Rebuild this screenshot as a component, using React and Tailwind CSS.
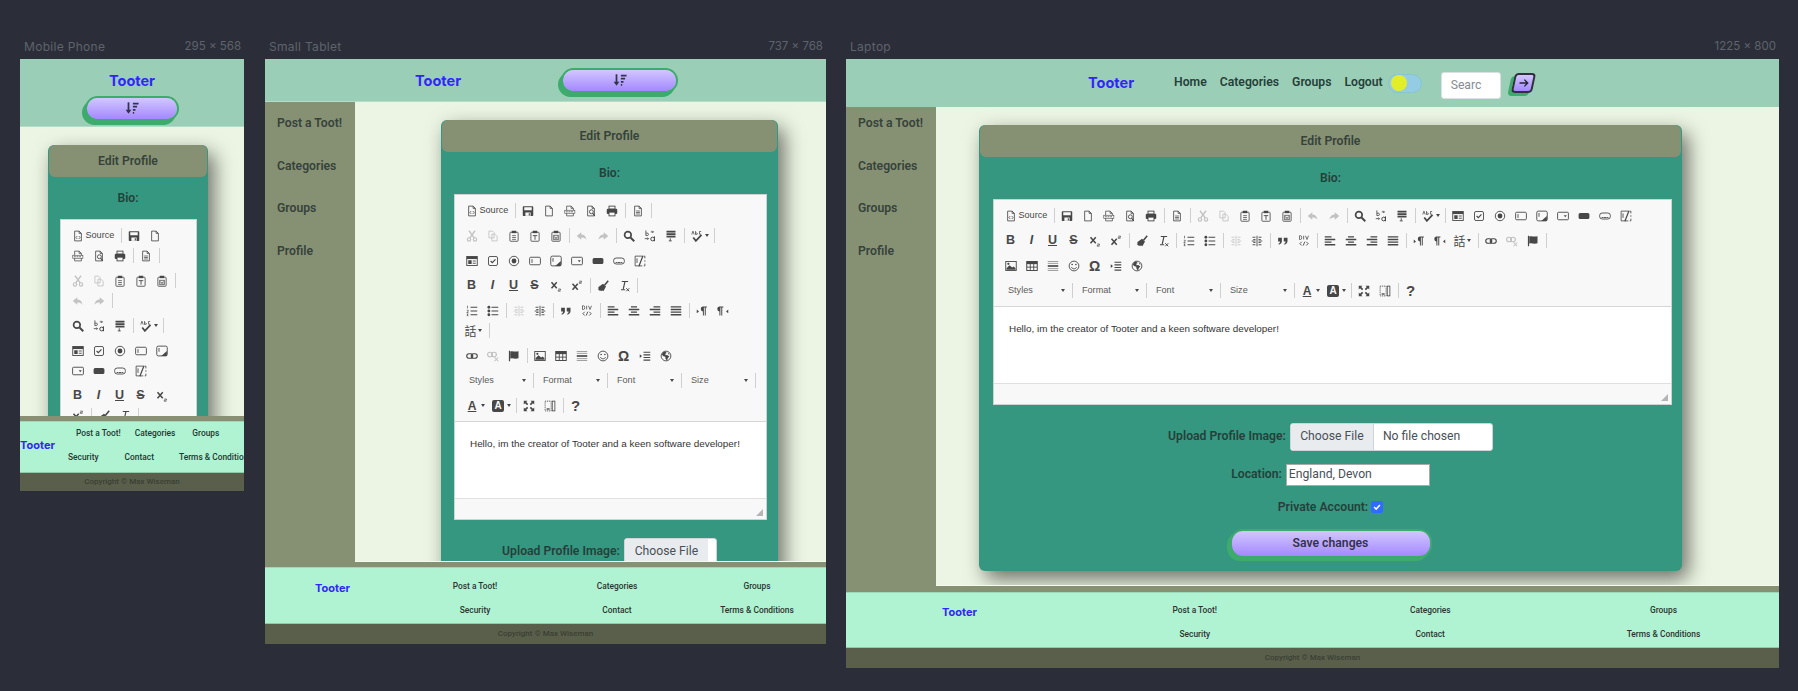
import React from "react";

const ROBOTO = "font-['Roboto','Inter',sans-serif]";

const doc = "M3.5 1.5h6l3 3v10h-9z M9.5 1.5v3h3";
const P = ({ d, w = 1.3, f = "none" }) => (
  <path d={d} fill={f} stroke={f === "none" ? "currentColor" : "none"} strokeWidth={w} />
);

const clip = (
  <>
    <rect x="2.5" y="3" width="11" height="12" rx="1" fill="none" stroke="currentColor" strokeWidth="1.1" />
    <rect x="5" y="1" width="6" height="3.2" fill="currentColor" />
  </>
);

const icons = {
  source: <><P d={doc} w={1.1} /><P d="M7 8 5.2 10 7 12 M9 8l1.8 2L9 12" w={1} /></>,
  save: <><P f="currentColor" d="M1 2.5a1 1 0 0 1 1-1h12a1 1 0 0 1 1 1v11a1 1 0 0 1-1 1H2a1 1 0 0 1-1-1z" /><rect x="3" y="3" width="10" height="4" fill="#f8f8f8" /><rect x="4.5" y="10" width="7" height="4.5" fill="#f8f8f8" /><rect x="9" y="11" width="1.5" height="3" fill="currentColor" /></>,
  newpage: <P d={doc} w={1.1} />,
  pdf: <><P d={doc} w={1} /><rect x="1" y="7" width="13.5" height="4" fill="#f8f8f8" stroke="currentColor" strokeWidth="0.8" /><path d="M2.500 9h10.500" stroke="currentColor" strokeWidth="1" strokeDasharray="2.500 1" /></>,
  preview: <><P d={doc} w={1.1} /><circle cx="8.5" cy="9" r="2.6" fill="none" stroke="currentColor" strokeWidth="1.2" /><P d="M10.2 11 13 14.5" w={1.6} /></>,
  print: <><rect x="4" y="1.5" width="8" height="4" fill="none" stroke="currentColor" strokeWidth="1.2" /><rect x="1" y="5" width="14" height="7" rx="1.5" fill="currentColor" /><rect x="4" y="9.5" width="8" height="5" fill="#f8f8f8" stroke="currentColor" strokeWidth="1.2" /></>,
  templates: <><P d={doc} w={1.1} /><P d="M5.5 8h5 M5.5 10h5 M5.5 12h5" w={1} /></>,
  cut: <><circle cx="4" cy="12.5" r="2.2" fill="none" stroke="currentColor" strokeWidth="1.6" /><circle cx="12" cy="12.5" r="2.2" fill="none" stroke="currentColor" strokeWidth="1.6" /><P d="M5 10.5 12 1 M11 10.5 4 1" w={1.8} /></>,
  copy: <><P d="M2.5 1.5h5l2 2v7h-7z" w={1.1} /><P d="M6.5 5.5h4l3 3v6h-7z" w={1.1} /></>,
  paste: <>{clip}<P d="M5.5 7.5h5 M5.5 10h5 M5.5 12.5h5" w={1} /></>,
  pastetext: <>{clip}<P d="M5 7.5h6 M8 7.5v5.5" w={1.2} /></>,
  pasteword: <>{clip}<rect x="5" y="7" width="6" height="6" fill="none" stroke="currentColor" strokeWidth="1" /><P d="M6.2 8.500 7 11.500 8 9.500l1 2 .8-3" w={.8} /></>,
  undo: <P f="currentColor" d="M7 3 1 8l6 5V10c3 0 5 .5 7 3-.5-4-3-7-7-7z" />,
  redo: <P f="currentColor" d="M9 3l6 5-6 5V10c-3 0-5 .5-7 3 .5-4 3-7 7-7z" />,
  find: <><circle cx="6.5" cy="6.5" r="4.4" fill="none" stroke="currentColor" strokeWidth="2.2" /><P d="m10 10 5 5" w={2.6} /></>,
  replace: <><P d="M2.500 .5v7 M2.500 4.200h1.800a1.600 1.600 0 0 1 0 3.200H2.500 M9 2.500h3.500l-1.500-1.500 M12.500 2.500 11 4 M1 11.500h5 M4.500 10 6 11.500 4.500 13" w={1.100} /><circle cx="11.500" cy="12" r="2.500" fill="none" stroke="currentColor" strokeWidth="1.300" /><P d="M14 8.500v6.500" w={1.300} /></>,
  selectall: <><rect x="2" y="1" width="12" height="2.4" fill="currentColor" /><rect x="2" y="4.3" width="12" height="2.4" fill="currentColor" /><rect x="2" y="7.6" width="12" height="2.4" fill="currentColor" /><P d="M7 11v3.5 M5 14.5h4" w={1.2} /></>,
  scayt: <><P d="M1 6 2.6 1.5 4.2 6 M6 1.5V6h1.5a1 1 0 0 0 0-2H6 M13.5 2h-2.2v3.6h2.2" w={1} /><P d="m3 10 3.5 4.5L14 6.5" w={2.3} /></>,
  form: <><rect x="1" y="2" width="14" height="12" fill="none" stroke="currentColor" strokeWidth="1.2" /><rect x="1" y="2" width="14" height="3.4" fill="currentColor" /><rect x="3" y="7" width="4.5" height="5" fill="currentColor" /><P d="M9 8h4 M9 11h4" w={1.2} /></>,
  checkbox: <><rect x="2" y="2" width="12" height="12" rx="2" fill="none" stroke="currentColor" strokeWidth="1.2" /><P d="m4.8 8 2.3 2.3 4.2-4.6" w={1.5} /></>,
  radio: <><circle cx="8" cy="8" r="6.3" fill="none" stroke="currentColor" strokeWidth="1.2" /><circle cx="8" cy="8" r="3.2" fill="currentColor" /></>,
  textfield: <><rect x="0.8" y="3" width="14.4" height="10" rx="1.5" fill="none" stroke="currentColor" strokeWidth="1.2" /><P d="M4 5.5v5" w={1.2} /></>,
  textarea: <><rect x="1" y="1.5" width="14" height="13" rx="2" fill="none" stroke="currentColor" strokeWidth="1.2" /><P d="M4 4v5" w={1.2} /><P f="currentColor" d="M14.5 8v6.5H7z" /></>,
  select: <><rect x="0.8" y="3" width="14.4" height="10" rx="1.2" fill="none" stroke="currentColor" strokeWidth="1.2" /><P f="currentColor" d="M9 7h4l-2 2.5z" /></>,
  button: <rect x="0.8" y="4" width="14.4" height="8" rx="2" fill="currentColor" />,
  imagebutton: <><rect x="0.8" y="4" width="14.4" height="8" rx="3.5" fill="none" stroke="currentColor" strokeWidth="1.2" /><P d="M3.5 10h2.5 M10 10h2.5 M6.5 10h3" w={1.2} /></>,
  hidden: <><P d="M11 1.5H1.5v13H11" w={1.1} /><P d="M13 1.5h1.5v3 M14.5 7v2 M14.5 11.5v3H13" w={1.1} /><P d="M4 4.5v6" w={1.2} /><P d="M12 1 6.5 15" w={1.6} /></>,
  sub: <><P d="m2 3 7 8 M9 3l-7 8" w={2} /><P d="M11 12h3v1.5h-3V15h3" w={.9} /></>,
  sup: <><P d="m2 5 7 8 M9 5l-7 8" w={2} /><P d="M11 1.5h3V3h-3v1.5h3" w={.9} /></>,
  copyformat: <><P d="m15 1-5 6" w={2} /><P f="currentColor" d="m8 5 4 3.5-3.5 6.5-2-1.5-.5 1.5-1-1-1 .5L1 12l1.5-1-1-1.5z" /></>,
  removeformat: <><P d="M5 2h8.5 M9.3 2 7 12 M4 13h5.5" w={1.5} /><P d="m11 11 4 4 M15 11l-4 4" w={1.3} /></>,
  ol: <><P d="M6 3h9 M6 8h9 M6 13h9" w={1.5} /><P d="M2 1v3.5 M1 7h2v1.4L1 10h2.2 M1 12h2L1.5 13 3 14.2H1" w={.9} /></>,
  ul: <><P d="M6 3h9 M6 8h9 M6 13h9" w={1.5} /><circle cx="2.5" cy="3" r="1.9" fill="currentColor" /><circle cx="2.5" cy="8" r="1.9" fill="currentColor" /><circle cx="2.5" cy="13" r="1.9" fill="currentColor" /></>,
  outdent: <><P d="M8 1v14" w={1} /><P d="M2 3h4 M3 6h3 M1 8h5 M3 10h3 M2 13h4 M10 3h4 M10 6h3 M10 8h5 M10 10h3 M10 13h4" w={1} /></>,
  indent: <><P d="M8 1v14" w={1.2} /><P d="M2 3h4 M3 6h3 M1 8h5 M3 10h3 M2 13h4 M10 3h4 M10 6h3 M10 8h5 M10 10h3 M10 13h4" w={1.2} /></>,
  blockquote: <><P f="currentColor" d="M1.5 3.5h5v4.5c0 2.2-1.2 4-4 5l-.6-1.2C3.2 11 4 10 4 8.5H1.5z" /><P f="currentColor" d="M9 3.5h5v4.5c0 2.2-1.2 4-4 5l-.6-1.2c1.300-.8 2.100-1.800 2.100-3.300H9z" /></>,
  div: <><P d="M2 1v5h1.5a1.500 2.500 0 0 0 0-5z M7.500 1v5 M10 1l2 5 2-5" w={1} /><P d="M5 9 2.500 11.500 5 14 M11 9l2.500 2.500L11 14 M9 9l-2 5" w={1.200} /></>,
  left: <P d="M1 2.500h9 M1 6h14 M1 9.500h9 M1 13h14" w={1.800} />,
  center: <P d="M4 2.500h8 M1 6h14 M4 9.500h8 M1 13h14" w={1.800} />,
  right: <P d="M6 2.500h9 M1 6h14 M6 9.500h9 M1 13h14" w={1.800} />,
  justify: <P d="M1 2.500h14 M1 6h14 M1 9.500h14 M1 13h14" w={1.800} />,
  ltr: <><P f="currentColor" d="M1 6l3 2.500L1 11z" /><P f="currentColor" d="M9 2h5.500v1.400H13V14h-1.300V3.400h-1.200V14H9.200V8.500a3.300 3.300 0 0 1-.2-6.500z" /></>,
  rtl: <><P f="currentColor" d="M15 6l-3 2.500 3 2.500z" /><P f="currentColor" d="M3 2h5.500v1.400H7V14H5.700V3.400H4.500V14H3.200V8.500A3.300 3.300 0 0 1 3 2z" /></>,
  link: <><rect x="1" y="5" width="8" height="6" rx="3" fill="none" stroke="currentColor" strokeWidth="1.500" /><rect x="7" y="5" width="8" height="6" rx="3" fill="none" stroke="currentColor" strokeWidth="1.500" /></>,
  unlink: <><rect x="0.800" y="3" width="6.500" height="6" rx="3" fill="none" stroke="currentColor" strokeWidth="1.500" /><rect x="6" y="3" width="6.500" height="6" rx="3" fill="none" stroke="currentColor" strokeWidth="1.500" /><P d="m10 10 5 5 M15 10l-5 5" w={1.400} /></>,
  anchor: <><P d="M2 1v14" w={1.600} /><P f="currentColor" d="M3 2c3.500-1.500 5.500 1 11-.5v9.500c-5.500 1.500-7.500-1-11 .5z" /></>,
  image: <><rect x="1" y="2" width="14" height="12" fill="none" stroke="currentColor" strokeWidth="1.200" /><P f="currentColor" d="M2 13V11l4-4 3.500 3 2-1.500L14 11v2z" /><circle cx="4.500" cy="5" r="1.500" fill="currentColor" /></>,
  table: <><rect x="1" y="2" width="14" height="12" fill="none" stroke="currentColor" strokeWidth="1.300" /><rect x="1" y="2" width="14" height="3.500" fill="currentColor" /><P d="M1 9.500h14 M5.700 5v9 M10.300 5v9" w={1.200} /></>,
  hr: <><g opacity="0.55"><P d="M1 2h14 M1 4.500h14 M1 11.500h14 M1 14h14" w={1.200} /></g><P d="M1 8h14" w={2.200} /></>,
  smiley: <><circle cx="8" cy="8" r="6.500" fill="none" stroke="currentColor" strokeWidth="1.200" /><circle cx="5.500" cy="6" r="1.100" fill="currentColor" /><circle cx="10.500" cy="6" r="1.100" fill="currentColor" /><P d="M4.500 9.500c1.500 3 5.500 3 7 0" w={1.200} /></>,
  pagebreak: <><P f="currentColor" d="M1 5.500 4 8 1 10.500z" /><P d="M6 3h9 M6 6.500h9 M6 10h9 M6 13.500h9" w={1.600} /></>,
  globe: <><circle cx="8" cy="8" r="6.500" fill="none" stroke="currentColor" strokeWidth="1.200" /><P f="currentColor" d="M7 2 4 3 2.500 6 4 8l3 1 .5 3 2 2 1-3.500 2-2-3-2-2 .5-.5-2 2-1z" /><P f="currentColor" d="m10 3 3 2.500L11.500 6z" /></>,
  maximize: <><P f="currentColor" d="M1 1h5L4.300 2.700 7 5.400 5.400 7 2.700 4.300 1 6z" /><P f="currentColor" d="M15 1v5l-1.700-1.700L10.600 7 9 5.400l2.700-2.700L10 1z" /><P f="currentColor" d="M1 15v-5l1.700 1.700L5.400 9 7 10.600l-2.700 2.700L6 15z" /><P f="currentColor" d="M15 15h-5l1.700-1.700L9 10.600 10.600 9l2.700 2.700L15 10z" /></>,
  showblocks: <><rect x="1.500" y="1.500" width="8" height="13" fill="none" stroke="currentColor" strokeWidth="1.100" strokeDasharray="1.500 1" /><rect x="11" y="1.500" width="3.500" height="13" fill="none" stroke="currentColor" strokeWidth="1.100" /><P d="M3.500 12h4" w={1.800} /></>,
};

const disabled = new Set(["cut", "copy", "undo", "redo", "outdent", "unlink"]);

const Svg = ({ name }) => (
  <svg viewBox="0 0 16 16" className="w-3 h-3 block">{icons[name]}</svg>
);

const Arrow = () => (
  <span className="w-0 h-0 border-x-[2.5px] border-x-transparent border-t-[3px] border-t-[#474747]" />
);

const glyphClass = "leading-none font-['Liberation_Sans',sans-serif] text-[#474747]";

const Glyph = ({ k }) => {
  if (k === "bold") return <span className={`${glyphClass} text-[12.500px] font-bold`}>B</span>;
  if (k === "italic") return <span className={`${glyphClass} text-[12.500px] italic font-bold`}>I</span>;
  if (k === "underline") return <span className={`${glyphClass} text-[12.500px] font-bold underline`}>U</span>;
  if (k === "strike") return <span className={`${glyphClass} text-[12.500px] font-bold line-through`}>S</span>;
  if (k === "omega") return <span className={`${glyphClass} text-[14px] font-bold`}>Ω</span>;
  if (k === "help") return <span className={`${glyphClass} text-[15px] font-bold`}>?</span>;
  return null;
};

const Slot = ({ k }) => (
  <span className={`w-[21px] h-5 flex items-center justify-center text-[#474747] ${disabled.has(k) ? "opacity-30" : ""}`}>
    {icons[k] ? <Svg name={k} /> : <Glyph k={k} />}
  </span>
);

const Sep = () => (
  <span className="w-[5px] h-5 flex items-center pl-[3px]">
    <span className="w-px h-[15px] bg-[#cfcfcf]" />
  </span>
);

const Item = ({ k }) => {
  if (k === "|") return <Sep />;
  if (k === "source")
    return (
      <span className="w-[51px] h-5 flex items-center pl-[4.500px] gap-[2px] text-[#474747]">
        <Svg name="source" />
        <span className="text-[9.100px] font-['Liberation_Sans',sans-serif] leading-none">Source</span>
      </span>
    );
  if (k === "scayt")
    return (
      <span className="w-[25px] h-5 flex items-center pl-[4.500px] gap-[2px] text-[#474747]">
        <Svg name="scayt" />
        <Arrow />
      </span>
    );
  if (k === "lang")
    return (
      <span className="w-[25px] h-5 flex items-center pl-[3.500px] gap-[1.500px] text-[#474747]">
        <span className="text-[12px] leading-none font-['Noto_Sans_CJK_TC',sans-serif]">話</span>
        <Arrow />
      </span>
    );
  if (k === "textcolor" || k === "bgcolor")
    return (
      <span className="w-[26px] h-5 flex items-center pl-[5px] gap-[3px] text-[#474747]">
        {k === "textcolor" ? (
          <span className="w-3 text-center text-[12px] leading-none font-bold font-['Liberation_Sans',sans-serif] underline">A</span>
        ) : (
          <span className="w-3 h-3 rounded-[2px] bg-[#474747] text-[#f8f8f8] text-center text-[10px] leading-3 font-bold font-['Liberation_Sans',sans-serif]">A</span>
        )}
        <Arrow />
      </span>
    );
  if (["Styles", "Format", "Font", "Size"].includes(k))
    return (
      <span className="w-[69px] h-5 flex items-center pl-[8px] pr-[4px] justify-between text-[#5b5b5b]">
        <span className="text-[9.100px] font-['Liberation_Sans',sans-serif] leading-none">{k}</span>
        <Arrow />
      </span>
    );
  return <Slot k={k} />;
};

const Row = ({ spec }) => {
  const gap = spec.endsWith(";");
  const keys = spec.replace(/;$/, "").trim().split(/\s+/);
  return (
    <div className={`flex flex-nowrap ${gap ? "mb-[5px]" : ""}`}>
      {keys.map((k, i) => (
        <Item key={i} k={k} />
      ))}
    </div>
  );
};

const Editor = ({ rows, className }) => (
  <div className={`bg-white border border-[#d1d1d1] shrink-0 ${className}`}>
    <div className="bg-[#f8f8f8] border-b border-[#d6d6d6] pt-[5.500px] pl-[6px]">
      {rows.map((r, i) => (
        <Row key={i} spec={r} />
      ))}
    </div>
    <div className="h-[76px] bg-white px-[15px] pt-[15px] text-[#333] text-[9.900px] font-['Liberation_Sans',sans-serif]">
      Hello, im the creator of Tooter and a keen software developer!
    </div>
    <div className="h-[21px] bg-[#f8f8f8] border-t border-[#e0e0e0] relative">
      <span className="absolute right-[3px] bottom-[3px] w-0 h-0 border-l-[7px] border-l-transparent border-b-[7px] border-b-[#b5b5b5]" />
    </div>
  </div>
);

const logoBase = "font-bold text-[#3125ff] leading-none font-['Inter',sans-serif]";
const Logo = ({ className = "" }) => <span className={`${logoBase} text-[14.500px] ${className}`}>Tooter</span>;
const FootLogo = ({ className = "" }) => <span className={`${logoBase} text-[11px] ${className}`}>Tooter</span>;

const SortIcon = () => (
  <svg viewBox="0 0 16 16" className="w-[14px] h-[14px] text-[#33344a]">
    <path d="M4 1.500v11" stroke="currentColor" strokeWidth="2" fill="none" />
    <path d="M0.800 10 4 14.500 7.200 10z" fill="currentColor" />
    <path d="M9 3h6.500 M9 6.500h4.800 M9 10h3 M9 13.500h1.500" stroke="currentColor" strokeWidth="2" fill="none" />
  </svg>
);

const SortBtn = ({ className = "" }) => (
  <div className={`h-[21px] rounded-[11px] flex items-center justify-center bg-gradient-to-b from-[#d3c6ff] to-[#a488ff] shadow-[0_0_0_2px_#3dab6c,-3px_4px_0_2px_#3dab6c] ${className}`}>
    <SortIcon />
  </div>
);

const labelCls = `font-semibold text-[12.200px] text-[#25403a] leading-none ${ROBOTO}`;

const SideNav = ({ pt }) => (
  <div className={`w-[90px] shrink-0 bg-[#869174] pl-3 flex flex-col gap-[28.500px] ${labelCls} text-[#36423a] ${pt}`}>
    <span className="leading-[14px]">Post a Toot!</span>
    <span className="leading-[14px]">Categories</span>
    <span className="leading-[14px]">Groups</span>
    <span className="leading-[14px]">Profile</span>
  </div>
);

const FooterDark = ({ h }) => (
  <div className={`${h} bg-[#5a5f4b] border-t border-[#8fc9a8] flex items-center justify-center shrink-0`}>
    <span className={`text-[8px] text-[#3a4034] ${ROBOTO} font-medium`}>Copyright © Max Wiseman</span>
  </div>
);

const linkCls = `text-[8.400px] font-medium text-[#2a3530] ${ROBOTO} text-center leading-none`;

const WideFooter = ({ cls }) => (
  <div className={`bg-[#aff3d3] border-t border-[#9ad9b9] grid grid-rows-[24px_24px] items-center shrink-0 ${cls}`}>
    <div className="text-center pr-[4px]">
      <FootLogo />
    </div>
    {["Post a Toot!", "Categories", "Groups"].map((t) => (
      <div key={t} className={linkCls}>{t}</div>
    ))}
    <div />
    {["Security", "Contact", "Terms & Conditions"].map((t) => (
      <div key={t} className={linkCls}>{t}</div>
    ))}
  </div>
);

const CardHead = () => (
  <div className={`h-[32px] mx-px mt-px rounded-[6px] bg-[#869174] flex items-center justify-center ${labelCls} text-[#36423a]`}>
    Edit Profile
  </div>
);

const Bio = () => (
  <div className={`h-[42px] flex items-center justify-center ${labelCls}`}>Bio:</div>
);

const Card = ({ className, children }) => (
  <div className={`rounded-[6px] bg-[#359780] shadow-[6px_8px_20px_rgba(0,0,0,0.55)] shrink-0 ${className}`}>
    {children}
  </div>
);

const Frame = ({ title, size, width, height, children }) => (
  <div className={`${width} shrink-0`}>
    <div className="h-[16px] mb-[4px] pl-1 pr-[3px] flex items-center justify-between text-[12px] text-[#5f636d] font-['Inter',sans-serif]">
      <span className="tracking-[0.3px]">{title}</span>
      <span className="text-[11.500px]">{size}</span>
    </div>
    <div className={`${height} flex flex-col overflow-hidden`}>{children}</div>
  </div>
);

const mobileRows = [
  "source | save newpage",
  "pdf preview print | templates | ;",
  "cut copy paste pastetext pasteword |",
  "undo redo | ;",
  "find replace selectall | scayt | ;",
  "form checkbox radio textfield textarea",
  "select button imagebutton hidden ;",
  "bold italic underline strike sub",
  "sup | copyformat removeformat |",
];

const tabletRows = [
  "source | save newpage pdf preview print | templates | ;",
  "cut copy paste pastetext pasteword | undo redo | find replace selectall | scayt | ;",
  "form checkbox radio textfield textarea select button imagebutton hidden ;",
  "bold italic underline strike sub sup | copyformat removeformat | ;",
  "ol ul | outdent indent | blockquote div | left center right justify | ltr rtl",
  "lang | ;",
  "link unlink anchor | image table hr smiley omega pagebreak globe ;",
  "Styles | Format | Font | Size | ;",
  "textcolor bgcolor | maximize showblocks | help ;",
];

const laptopRows = [
  "source | save newpage pdf preview print | templates | cut copy paste pastetext pasteword | undo redo | find replace selectall | scayt | form checkbox radio textfield textarea select button imagebutton hidden ;",
  "bold italic underline strike sub sup | copyformat removeformat | ol ul | outdent indent | blockquote div | left center right justify | ltr rtl lang | link unlink anchor | ;",
  "image table hr smiley omega pagebreak globe ;",
  "Styles | Format | Font | Size | textcolor bgcolor | maximize showblocks | help ;",
];

const inputText = `text-[12.200px] text-[#495057] ${ROBOTO}`;

const Mobile = () => (
  <Frame title="Mobile Phone" size="295 x 568" width="w-[224px]" height="h-[432px]">
    <div className="h-[68px] bg-[#9bceb6] border-b border-[#b5dcc6] flex flex-col items-center pt-[15px] shrink-0">
      <Logo />
      <SortBtn className="w-[90px] mt-[9px]" />
    </div>
    <div className="flex-1 min-h-0 bg-[#869174] pb-[5px]">
      <div className="h-full bg-[#ecf5e3] overflow-hidden pt-[17px] pl-[28px]">
        <Card className="w-[160px] h-[400px]">
          <CardHead />
          <Bio />
          <Editor rows={mobileRows} className="w-[137px] ml-[12px]" />
        </Card>
      </div>
    </div>
    <div className="h-[51px] bg-[#aff3d3] border-t border-[#9ad9b9] flex items-center shrink-0 overflow-hidden pb-[4px]">
      <FootLogo className="w-[33px] shrink-0 mt-[1px]" />
      <div className="flex flex-col gap-[15.600px] whitespace-nowrap">
        <div className={`${linkCls} flex pl-[23px]`}>
          <span>Post a Toot!</span>
          <span className="ml-[14px]">Categories</span>
          <span className="ml-[17px]">Groups</span>
        </div>
        <div className={`${linkCls} flex pl-[15px]`}>
          <span>Security</span>
          <span className="ml-[26px]">Contact</span>
          <span className="ml-[25px]">Terms & Conditions</span>
        </div>
      </div>
    </div>
    <FooterDark h="h-[19px]" />
  </Frame>
);

const Tablet = () => (
  <Frame title="Small Tablet" size="737 x 768" width="w-[561px]" height="h-[585px]">
    <div className="h-[43px] bg-[#9bceb6] border-b border-[#b5dcc6] flex items-center shrink-0 pl-[150px]">
      <Logo className="mt-[2px]" />
      <SortBtn className="w-[113px] ml-[102px]" />
    </div>
    <div className="flex-1 min-h-0 bg-[#869174] pb-[5px] flex">
      <SideNav pt="pt-[14px]" />
      <div className="flex-1 bg-[#ecf5e3] overflow-hidden pt-[17px] pl-[86px] border-b border-[#f6f9ef]">
        <Card className="w-[337px] h-[600px]">
          <CardHead />
          <Bio />
          <Editor rows={tabletRows} className="w-[313px] ml-[13px]" />
          <div className="flex items-center justify-center gap-[4px] mt-[18px]">
            <span className={labelCls}>Upload Profile Image:</span>
            <div className="w-[93px] h-[28px] bg-white rounded-[3px] border border-[#ced4da] overflow-hidden">
              <div className={`w-[83px] h-full bg-[#e9ecef] flex items-center justify-center ${inputText}`}>Choose File</div>
            </div>
          </div>
        </Card>
      </div>
    </div>
    <WideFooter cls="h-[56px] pt-[6px] grid-cols-[139px_142px_142px_138px]" />
    <FooterDark h="h-[21px]" />
  </Frame>
);

const Laptop = () => (
  <Frame title="Laptop" size="1225 x 800" width="w-[933px]" height="h-[609px]">
    <div className="h-[48px] bg-[#9bceb6] flex items-center shrink-0 pl-[242px]">
      <Logo />
      <nav className={`flex items-center gap-[13px] ml-[40px] -mt-[1px] ${labelCls} text-[#2f3a35]`}>
        <span>Home</span>
        <span>Categories</span>
        <span>Groups</span>
        <span>Logout</span>
      </nav>
      <div className="w-[34px] h-[19px] ml-[5px] rounded-full bg-[#94cde3] border border-[#86c6cf] flex items-center pl-[2px]">
        <span className="w-[16px] h-[16px] rounded-full bg-[#e3ee2b]" />
      </div>
      <div className={`w-[60px] h-[27px] ml-[19px] mt-[5px] bg-white rounded-[3px] border border-[#d9dfe3] overflow-hidden flex items-center pl-[9px] text-[12.200px] text-[#858c94] ${ROBOTO}`}>
        Searc
      </div>
      <div className="w-[21px] h-[20px] ml-[12px] -skew-x-[12deg] rounded-[4px] border-2 border-[#30303f] bg-gradient-to-b from-[#d3c6ff] to-[#a488ff] shadow-[-3px_3px_0_0_#3dab6c] flex items-center justify-center">
        <svg viewBox="0 0 16 16" className="w-3 h-3 skew-x-[12deg]">
          <path d="M2 8h11 M8.500 3.500 13 8l-4.500 4.500" stroke="#25253a" strokeWidth="1.800" fill="none" />
        </svg>
      </div>
    </div>
    <div className="flex-1 min-h-0 bg-[#869174] pb-[6px] flex">
      <SideNav pt="pt-[9px]" />
      <div className="flex-1 bg-[#ecf5e3] overflow-hidden pt-[17px] pl-[43px] border-b border-[#f6f9ef]">
        <Card className="w-[703px] h-[446px]">
          <CardHead />
          <Bio />
          <Editor rows={laptopRows} className="w-[679px] ml-[14px]" />
          <div className="flex items-center justify-center gap-[4px] mt-[18px]">
            <span className={labelCls}>Upload Profile Image:</span>
            <div className="w-[203px] h-[28px] bg-white rounded-[3px] border border-[#ced4da] overflow-hidden flex items-center">
              <div className={`w-[83px] h-full bg-[#e9ecef] flex items-center justify-center border-r border-[#ced4da] ${inputText}`}>Choose File</div>
              <span className={`pl-[9px] ${inputText}`}>No file chosen</span>
            </div>
          </div>
          <div className="flex items-center justify-center gap-[4px] mt-[13px]">
            <span className={labelCls}>Location:</span>
            <div className={`w-[144px] h-[22px] bg-white border border-[#aaa] flex items-center pl-[2px] ${inputText}`}>England, Devon</div>
          </div>
          <div className="flex items-center justify-center gap-[3px] mt-[15px]">
            <span className={labelCls}>Private Account:</span>
            <span className="w-3 h-3 rounded-[2px] bg-[#2f6bff] flex items-center justify-center">
              <svg viewBox="0 0 12 12" className="w-[10px] h-[10px]"><path d="m2.500 6 2.500 2.500 4.500-5" stroke="#fff" strokeWidth="1.800" fill="none" /></svg>
            </span>
          </div>
          <div className="flex justify-center mt-[18px]">
            <div className={`w-[198px] h-[25px] rounded-[11px] bg-gradient-to-b from-[#d3c6ff] to-[#a488ff] shadow-[0_0_0_2px_#3dab6c,-3px_3px_0_2px_#3dab6c] flex items-center justify-center ${labelCls} text-[#33344a]`}>
              Save changes
            </div>
          </div>
        </Card>
      </div>
    </div>
    <WideFooter cls="h-[55px] pt-[5px] grid-cols-[231px_235.500px_235.500px_231px]" />
    <FooterDark h="h-[21px]" />
  </Frame>
);

export default function App() {
  return (
    <div className="w-[1798px] h-[691px] bg-[#2b2e38] overflow-hidden pt-[39px] pl-[20px] flex">
      <Mobile />
      <div className="w-[21px] shrink-0" />
      <Tablet />
      <div className="w-[20px] shrink-0" />
      <Laptop />
    </div>
  );
}
